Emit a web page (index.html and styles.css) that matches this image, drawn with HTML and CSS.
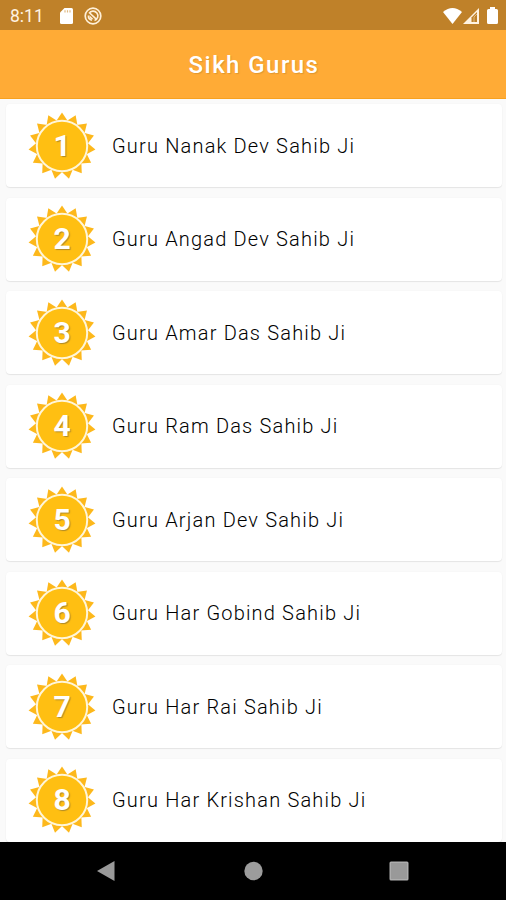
FILE: index.html
```html
<!DOCTYPE html>
<html lang="en">
<head>
  <meta charset="UTF-8">
  <meta name="viewport" content="width=device-width, initial-scale=1.0">
  <title>Sikh Gurus</title>
  <link rel="stylesheet" href="styles.css">
</head>
<body>
  <div class="app">
    <div class="status-bar">
      <span class="status-time">8:11</span>
      <svg class="icon-card" width="13" height="16" viewBox="0 0 13 16">
        <path d="M4.5 0H11.5Q13 0 13 1.5V14.5Q13 16 11.5 16H1.5Q0 16 0 14.5V4.5Z" fill="#fff"/>
        <path d="M5 2.2v2.2M7.5 2.2v2.2M10 2.2v2.2" stroke="#dfba84" stroke-width="1.2"/>
      </svg>
      <svg class="icon-sync" width="18" height="18" viewBox="0 0 18 18" fill="none" stroke="#fff0d8">
        <circle cx="9" cy="9" r="7.8" stroke-width="1.7"/>
        <path d="M5 6.4A4.8 4.8 0 1 1 10.5 13.5M5.2 5.5L13 12.8M4.4 8.5A4.6 4.6 0 0 0 8 13.2" stroke-width="1.6"/>
        <path d="M5.3 8.2L9.6 12.2H7.2Q5.3 11 5.3 8.2Z" fill="#fff0d8" stroke="none"/>
      </svg>
      <div class="status-right">
        <svg width="19" height="16" viewBox="0 0 19 16"><path d="M0 4Q9.5-4 19 4L9.5 16Z" fill="#fff"/></svg>
        <svg class="icon-signal" width="16" height="16" viewBox="0 0 16 16">
          <path d="M0 16L16 0V16Z" fill="#fff3e2"/>
          <path d="M8.5 9.5L14 4V14H8.5Z" fill="#bf8129"/>
          <path d="M11 14V9L14 6" fill="none" stroke="#e8c799" stroke-width=".8"/>
        </svg>
        <svg class="icon-battery" width="11" height="17" viewBox="0 0 11 17"><path d="M3 0H8V2H9.5Q11 2 11 3.5V15.5Q11 17 9.5 17H1.5Q0 17 0 15.5V3.5Q0 2 1.5 2H3Z" fill="#fff"/></svg>
      </div>
    </div>
    <header class="app-bar"><h1>Sikh Gurus</h1></header>

    <main class="guru-list"></main>

    <nav class="nav-bar">
      <svg viewBox="0 0 20 22" width="20" height="22"><path d="M1 11L18.5 1V21Z" fill="#999"/></svg>
      <svg viewBox="0 0 20 20" width="20" height="20"><circle cx="10.5" cy="10" r="9.2" fill="#9c9c9c"/></svg>
      <svg viewBox="0 0 20 20" width="20" height="20"><rect x=".5" y=".5" width="19" height="19" rx="1.5" fill="#adadad"/><rect x="2" y="2" width="16" height="16" fill="#999"/></svg>
    </nav>
  </div>

  <script src="script.js"></script>
</body>
</html>
```
FILE: styles.css
```css
* {
  box-sizing: border-box;
}

body {
  margin: 0;
  font-family: Roboto, "Liberation Sans", sans-serif;
  background: #fafafa;
}

.app {
  display: flex;
  flex-direction: column;
  height: 900px;
  overflow: hidden;
}

.status-bar {
  display: flex;
  flex: none;
  align-items: center;
  height: 30px;
  padding: 1px 8px 0 10px;
  background: #bf8129;
  color: #fff3e2;
}

.status-time {
  width: 50px;
  font-size: 17.5px;
  line-height: 30px;
}

.icon-sync {
  margin-left: 11px;
}

.status-right {
  display: flex;
  align-items: center;
  margin-left: auto;
}

.icon-signal {
  margin-left: 1px;
}

.icon-battery {
  margin-left: 8px;
}

/* Title bar */
.app-bar {
  flex: none;
  height: 69px;
  background: #ffab36;
  border-bottom: 1px solid #f7a11f;
  text-align: center;
}

.app-bar h1 {
  margin: 0;
  padding-left: 2px;
  color: #fff;
  font-size: 24px;
  font-weight: 500;
  line-height: 70px;
  letter-spacing: 1.45px;
  text-shadow: 1px 1px 1px rgba(130, 90, 30, .25);
}

/* List */
.guru-list {
  display: flex;
  flex: 1;
  flex-direction: column;
  gap: 10.55px;
  min-height: 0;
  padding: 5px 4px 0 6px;
  overflow: hidden;
}

.guru-card {
  display: flex;
  flex: none;
  align-items: center;
  height: 83px;
  padding-left: 22px;
  background: #fff;
  border-radius: 4px;
  box-shadow: 0 1px 1px rgba(0, 0, 0, .08), 0 0 2px rgba(0, 0, 0, .04);
}

.guru-badge {
  display: grid;
  flex: none;
  width: 68px;
  height: 68px;
  place-items: center;
}

.guru-badge > * {
  grid-area: 1 / 1;
}

.guru-number {
  color: #fff;
  font-size: 30px;
  font-weight: 700;
  line-height: 68px;
  text-shadow: 1px 1px 1px rgba(110, 95, 60, .55);
}

.guru-name {
  margin-left: 16px;
  color: #000;
  font-size: 20px;
  font-weight: 300;
  letter-spacing: 1.18px;
  white-space: nowrap;
}

/* System navigation */
.nav-bar {
  display: flex;
  flex: none;
  align-items: center;
  justify-content: space-between;
  height: 58px;
  padding: 0 97px 0 96px;
  background: #000;
}
```
FILE: script.js
```js
const gurus = [
  'Guru Nanak Dev Sahib Ji',
  'Guru Angad Dev Sahib Ji',
  'Guru Amar Das Sahib Ji',
  'Guru Ram Das Sahib Ji',
  'Guru Arjan Dev Sahib Ji',
  'Guru Har Gobind Sahib Ji',
  'Guru Har Rai Sahib Ji',
  'Guru Har Krishan Sahib Ji'
];

// sun badge with 15 rays, the first one pointing up
function sunIcon() {
  let rays = '';
  for (let i = 0; i < 15; i++) {
    rays += `<path d="M34 .4L39.9 9.2H28.1Z" transform="rotate(${i * 24} 34 34)"/>`;
  }
  return `<svg width="68" height="68" viewBox="0 0 68 68" fill="#fdb81b">${rays}
    <circle cx="34" cy="34" r="25.2" fill="#ffbf12" stroke="#fff6da" stroke-width="2"/></svg>`;
}

document.querySelector('.guru-list').innerHTML = gurus.map((name, i) => `
  <div class="guru-card">
    <div class="guru-badge">${sunIcon()}<span class="guru-number">${i + 1}</span></div>
    <div class="guru-name">${name}</div>
  </div>`).join('');
```
